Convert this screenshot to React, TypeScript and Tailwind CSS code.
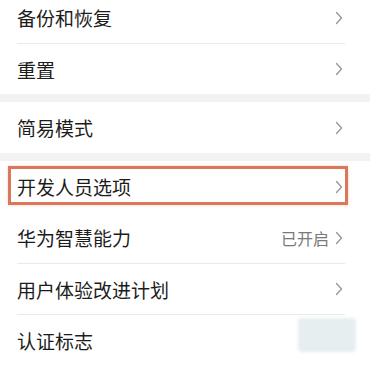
import React from "react";

const Chevron = () => (
  <svg width="8" height="14" viewBox="0 0 8 14" fill="none" className="shrink-0">
    <path d="M1.5 1.5L6.5 7L1.5 12.5" stroke="#9a9a9a" strokeWidth="1.4" strokeLinecap="round" strokeLinejoin="round" />
  </svg>
);

function Row({
  label,
  value,
  divider,
  highlight,
  blurred,
}: {
  label: string;
  value?: string;
  divider?: boolean;
  highlight?: boolean;
  blurred?: boolean;
}) {
  return (
    <div className="relative pl-[17px]">
      <div
        className={`flex h-[51px] items-center ${
          divider ? "mr-[25px] border-t border-[#e9e9e9] pr-[2px]" : "pr-[27px]"
        }`}
      >
        <span className="flex-1 text-[19px] leading-none text-[#1c1c1c]">{label}</span>
        {value && <span className="mr-[6px] text-[16px] leading-none text-[#7a7a7a]">{value}</span>}
        {blurred ? (
          <div className="mt-[-10px] mr-[-13px] h-[34px] w-[58px] rounded-sm bg-[#e6eef0] blur-[1.5px]" />
        ) : (
          <Chevron />
        )}
      </div>
      {highlight && (
        <div className="pointer-events-none absolute top-[5px] right-[22px] bottom-[7px] left-[8px] border-[3px] border-[#d9785b] shadow-[0_0_3px_rgba(217,120,91,0.35)]" />
      )}
    </div>
  );
}

export default function App() {
  return (
    <div
      className="h-[367px] w-[379px] overflow-hidden bg-white"
      style={{ fontFamily: '"Noto Sans CJK SC", "Noto Sans", sans-serif' }}
    >
      <div className="-mt-[8px] w-[370px]">
        <Row label="备份和恢复" />
        <Row label="重置" divider />
        <div className="h-[8px] bg-[#f2f2f2]" />
        <Row label="简易模式" />
        <div className="h-[8px] bg-[#f2f2f2]" />
        <Row label="开发人员选项" highlight />
        <Row label="华为智慧能力" value="已开启" />
        <Row label="用户体验改进计划" divider />
        <Row label="认证标志" divider blurred />
      </div>
    </div>
  );
}
